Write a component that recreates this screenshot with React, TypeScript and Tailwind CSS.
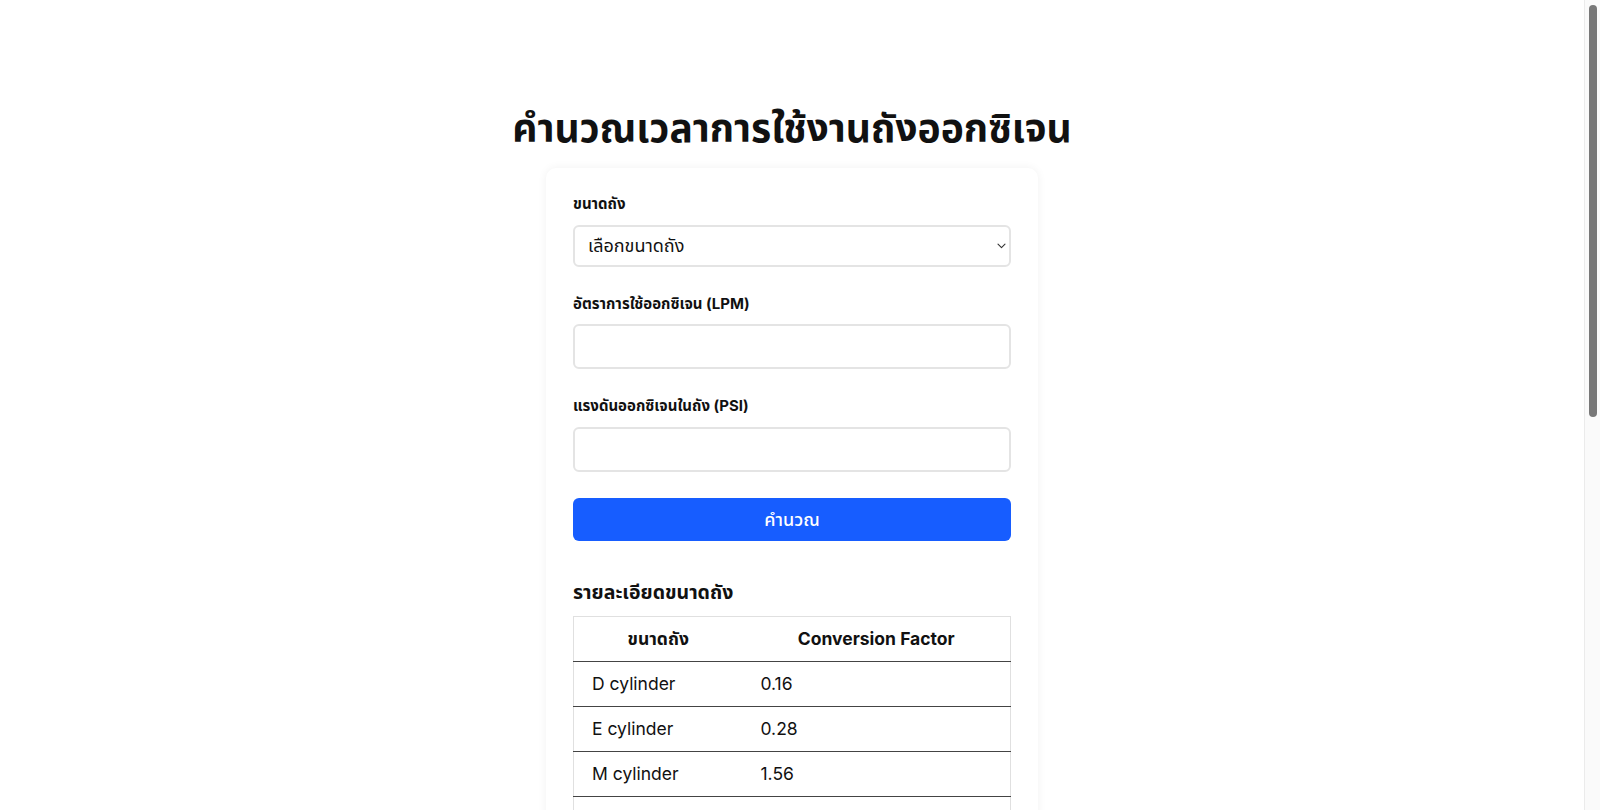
import React from "react";

const rows = [
  ["D cylinder", "0.16"],
  ["E cylinder", "0.28"],
  ["M cylinder", "1.56"],
  ["G cylinder", "2.41"],
  ["H cylinder", "3.14"],
];

function Label({ children, className = "" }: { children: React.ReactNode; className?: string }) {
  return (
    <label className={`block text-[15px] font-bold leading-[20px] text-[#111] ${className}`}>{children}</label>
  );
}

export default function App() {
  return (
    <div className="flex min-h-[1590px] bg-white font-['Inter','Noto_Sans_Thai',sans-serif] text-[#111]">
      <main className="flex flex-1 flex-col items-center">
        <h1 className="mt-[100px] mb-[12px] text-[39px] font-bold leading-[56px] text-[#111]">
          คำนวณเวลาการใช้งานถังออกซิเจน
        </h1>
        <div className="w-[492px] rounded-[10px] bg-white px-[27px] pt-[26px] pb-[40px] shadow-[0_0_10px_rgba(0,0,0,0.06)]">
          <Label className="mb-[10.5px]">ขนาดถัง</Label>
          <div className="relative">
            <select className="block h-[42px] w-full appearance-none rounded-[6px] border-2 border-[#e4e4e4] bg-white pl-[13px] pr-8 text-[18px] text-[#111] outline-none">
              <option>เลือกขนาดถัง</option>
              {rows.map((r) => (
                <option key={r[0]}>{r[0]}</option>
              ))}
            </select>
            <svg
              className="pointer-events-none absolute right-[5px] top-1/2 -translate-y-1/2"
              width="9"
              height="6"
              viewBox="0 0 9 6"
              fill="none"
            >
              <path d="M1 1.2l3.5 3.5 3.5-3.5" stroke="#333" strokeWidth="1.1" strokeLinecap="round" strokeLinejoin="round" />
            </svg>
          </div>

          <Label className="mt-[27px] mb-[10.5px]">อัตราการใช้ออกซิเจน (LPM)</Label>
          <input className="block h-[45px] w-full rounded-[6px] border-2 border-[#e4e4e4] bg-white px-3 text-[18px] outline-none" />

          <Label className="mt-[27px] mb-[10.5px]">แรงดันออกซิเจนในถัง (PSI)</Label>
          <input className="block h-[45px] w-full rounded-[6px] border-2 border-[#e4e4e4] bg-white px-3 text-[18px] outline-none" />

          <button className="mt-[26.5px] block h-[43px] w-full rounded-[6px] bg-[#175dff] text-[18px] font-medium text-white">
            คำนวณ
          </button>

          <h2 className="mt-[38px] mb-[11px] text-[19.5px] font-bold leading-[26px]">รายละเอียดขนาดถัง</h2>
          <table className="w-full border-collapse border border-[#e0e0e0] text-[17.5px]">
            <thead>
              <tr className="border-b-[1.5px] border-[#444]">
                <th className="h-[45px] w-[169px] text-center font-bold">ขนาดถัง</th>
                <th className="h-[45px] text-center font-bold">Conversion Factor</th>
              </tr>
            </thead>
            <tbody>
              {rows.map((r) => (
                <tr key={r[0]} className="border-b-[1.5px] border-[#444]">
                  <td className="h-[45px] px-[18px] font-normal">{r[0]}</td>
                  <td className="h-[45px] px-[18px]">{r[1]}</td>
                </tr>
              ))}
            </tbody>
          </table>
        </div>
      </main>
      <div className="sticky top-0 flex h-screen w-4 shrink-0 self-start justify-center border-l border-[#ebebeb] bg-[#fafafa] pt-[5px]">
        <div className="h-[412px] w-2 rounded-full bg-[#787878]" />
      </div>
    </div>
  );
}
